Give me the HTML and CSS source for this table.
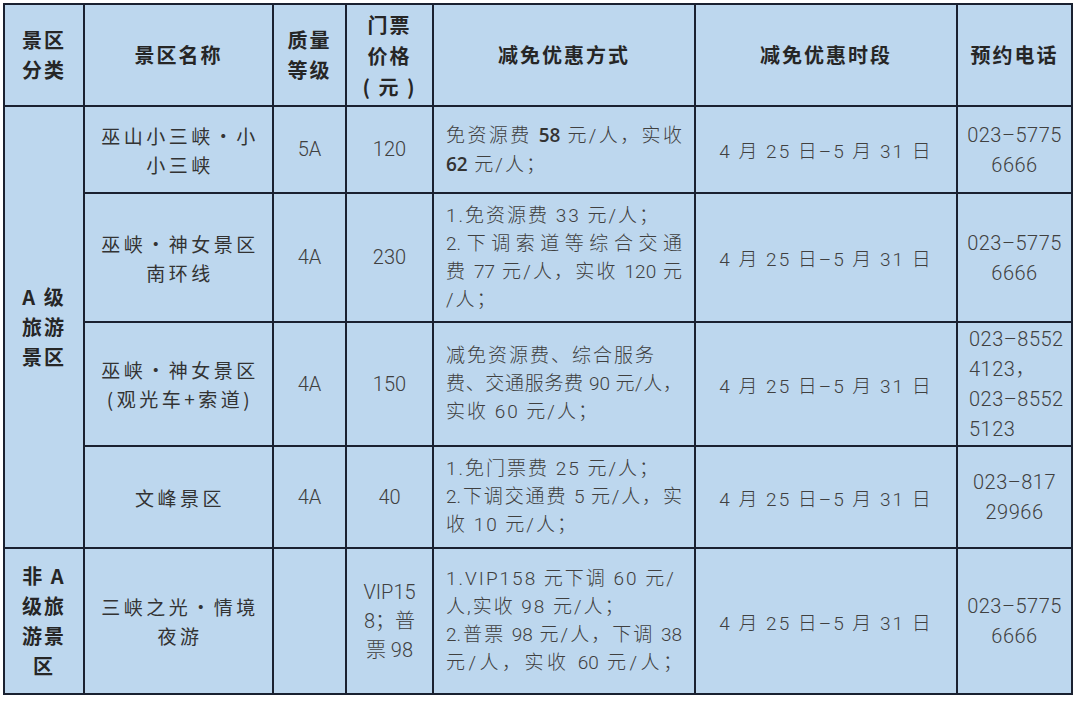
FILE: index.html
```html
<!DOCTYPE html>
<html lang="zh-CN">
<head>
<meta charset="utf-8">
<title>景区减免优惠</title>
<link rel="stylesheet" href="styles.css">
</head>
<body>
<table class="t">
  <colgroup>
    <col class="c1"><col class="c2"><col class="c3"><col class="c4"><col class="c5"><col class="c6"><col class="c7">
  </colgroup>
  <tr class="rh">
    <th>景区<br>分类</th>
    <th>景区名称</th>
    <th>质量<br>等级</th>
    <th class="price">门票<br>价格<br>( 元 )</th>
    <th>减免优惠方式</th>
    <th>减免优惠时段</th>
    <th>预约电话</th>
  </tr>
  <tr class="r1">
    <td class="cat" rowspan="4">A 级<br>旅游<br>景区</td>
    <td class="name">巫山小三峡·小<br>小三峡</td>
    <td class="num">5A</td>
    <td class="num">120</td>
    <td class="desc"><span class="j">免资源费 <b>58</b> 元/人，实收</span><span class="l"><b>62</b> 元/人；</span></td>
    <td class="date">4 月 25 日–5 月 31 日</td>
    <td class="tel">023–5775<br>6666</td>
  </tr>
  <tr class="r2">
    <td class="name">巫峡·神女景区<br>南环线</td>
    <td class="num">4A</td>
    <td class="num">230</td>
    <td class="desc"><span class="l">1.免资源费 33 元/人；</span><span class="j">2.下调索道等综合交通</span><span class="j">费 77 元/人，实收 120 元</span><span class="l">/人；</span></td>
    <td class="date">4 月 25 日–5 月 31 日</td>
    <td class="tel">023–5775<br>6666</td>
  </tr>
  <tr class="r3">
    <td class="name">巫峡·神女景区<br>(观光车+索道)</td>
    <td class="num">4A</td>
    <td class="num">150</td>
    <td class="desc"><span class="l">减免资源费、综合服务</span><span class="j">费、交通服务费 90 元/人，</span><span class="l">实收 60 元/人；</span></td>
    <td class="date">4 月 25 日–5 月 31 日</td>
    <td class="tel left">023–8552<br>4123，<br>023–8552<br>5123</td>
  </tr>
  <tr class="r4">
    <td class="name">文峰景区</td>
    <td class="num">4A</td>
    <td class="num">40</td>
    <td class="desc"><span class="l">1.免门票费 25 元/人；</span><span class="j">2.下调交通费 5 元/人，实</span><span class="l">收 10 元/人；</span></td>
    <td class="date">4 月 25 日–5 月 31 日</td>
    <td class="tel">023–817<br>29966</td>
  </tr>
  <tr class="r5">
    <td class="cat">非 A<br>级旅<br>游景<br>区</td>
    <td class="name">三峡之光·情境<br>夜游</td>
    <td class="num"></td>
    <td class="num vip">VIP15<br>8；普<br>票 98</td>
    <td class="desc"><span class="l">1.VIP158 元下调 60 元/</span><span class="l">人,实收 98 元/人；</span><span class="j">2.普票 98 元/人，下调 38</span><span class="j">元/人，实收 60 元/人；</span></td>
    <td class="date">4 月 25 日–5 月 31 日</td>
    <td class="tel">023–5775<br>6666</td>
  </tr>
</table>
</body>
</html>
```
FILE: styles.css
```css
html, body {
  margin: 0;
  padding: 0;
  background: #ffffff;
}

.t {
  border-collapse: separate;
  border-spacing: 0;
  table-layout: fixed;
  width: 1070px;
  margin: 3px 0 0 3px;
  border-top: 2px solid #1a2130;
  border-left: 2px solid #1a2130;
  background: #bdd7ee;
}

.c1 { width: 80px; }
.c2 { width: 189px; }
.c3 { width: 73px; }
.c4 { width: 87px; }
.c5 { width: 262px; }
.c6 { width: 262px; }
.c7 { width: 115px; }

.t th,
.t td {
  border-right: 2px solid #1a2130;
  border-bottom: 2px solid #1a2130;
  padding: 0;
  vertical-align: middle;
  text-align: center;
}

.rh { height: 102px; }
.r1 { height: 87px; }
.r2 { height: 129px; }
.r3 { height: 124px; }
.r4 { height: 102px; }
.r5 { height: 146px; }

.t th,
.cat {
  font-family: "Noto Sans CJK SC", "Noto Sans", sans-serif;
  font-weight: 700;
  font-size: 20px;
  line-height: 30px;
  letter-spacing: 2px;
  color: #262626;
}

.t th.price {
  line-height: 31px;
}

.name {
  font-family: "Noto Sans CJK SC", sans-serif;
  font-size: 19px;
  line-height: 29px;
  letter-spacing: 3.5px;
  color: #333333;
  padding-left: 3px !important;
}

.num,
.date,
.tel,
.desc {
  font-family: "Roboto", "Noto Sans CJK SC", sans-serif;
  font-weight: 300;
  color: #404040;
}

.num {
  font-size: 20px;
  line-height: 29px;
}

.vip {
  font-size: 20px;
}

.desc {
  text-align: left !important;
  padding: 0 12px !important;
  font-size: 19px;
  line-height: 28px;
  letter-spacing: 2px;
}

.desc .j,
.desc .l {
  display: block;
  white-space: nowrap;
}

.desc .j {
  text-align: justify;
  text-align-last: justify;
  letter-spacing: 0;
}

.desc b {
  font-family: "Open Sans", sans-serif;
  font-weight: 600;
  letter-spacing: 0;
  color: #333333;
}

.date {
  font-size: 19px;
  letter-spacing: 2px;
}

.tel {
  font-size: 20px;
  line-height: 30px;
  letter-spacing: 0.5px;
}

.tel.left {
  text-align: left !important;
  padding-left: 11px !important;
}
```
